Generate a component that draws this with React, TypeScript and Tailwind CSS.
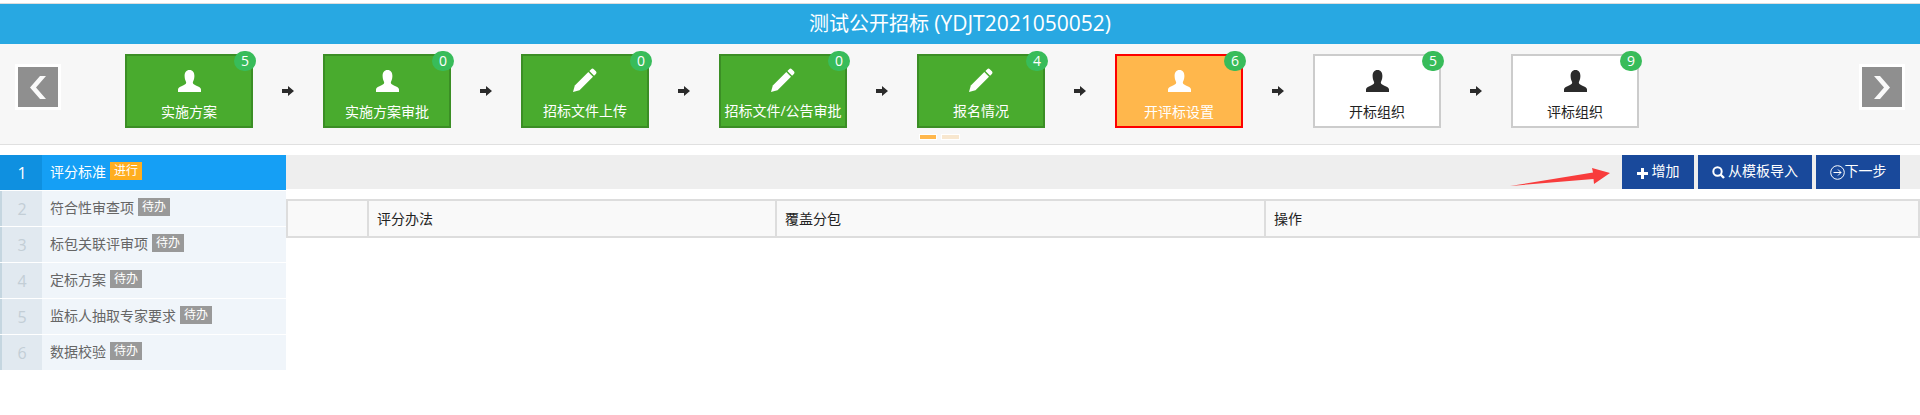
const steps = [
  { label: '实施方案', count: 5, icon: 'user', state: 'done' },
  { label: '实施方案审批', count: 0, icon: 'user', state: 'done' },
  { label: '招标文件上传', count: 0, icon: 'pencil', state: 'done' },
  { label: '招标文件/公告审批', count: 0, icon: 'pencil', state: 'done' },
  { label: '报名情况', count: 4, icon: 'pencil', state: 'done' },
  { label: '开评标设置', count: 6, icon: 'user', state: 'current' },
  { label: '开标组织', count: 5, icon: 'user', state: 'todo' },
  { label: '评标组织', count: 9, icon: 'user', state: 'todo' },
];

const menu = ['评分标准', '符合性审查项', '标包关联评审项', '定标方案', '监标人抽取专家要求', '数据校验'];

function UserIcon({ className }: { className: string }) {
  return (
    <svg width="23" height="22" viewBox="0 0 23 22" className={className} fill="currentColor">
      <path d="M11.5 0C14.8 0 16.4 2.5 16.4 6C16.4 9.2 15.2 11 14.8 12.6C14.8 14.4 17 15 19 16C21.5 17 23 18 23 19.5V22H0V19.5C0 18 1.5 17 4 16C6 15 8.2 14.4 8.2 12.6C7.8 11 6.6 9.2 6.6 6C6.6 2.5 8.2 0 11.5 0Z" />
    </svg>
  );
}

function PencilIcon({ className }: { className: string }) {
  return (
    <svg width="24" height="24" viewBox="0 0 24 24" className={className} fill="currentColor">
      <path d="M0 24L1.8 17.6L15.3 4.1L20 8.8L6.5 22.3Z" />
      <path d="M16.4 3L18.2 1.2C19 0.4 20 0.4 20.8 1.2L22.9 3.3C23.7 4.1 23.7 5.1 22.9 5.9L21.1 7.7Z" />
    </svg>
  );
}

function StepArrow() {
  return (
    <div className="w-[70px] flex items-center justify-center text-[#2b2b2b]">
      <svg width="12" height="10" viewBox="0 0 12 10" fill="currentColor">
        <path d="M0 3H6V0L12 5L6 10V7H0Z" />
      </svg>
    </div>
  );
}

function NavButton({ points }: { points: string }) {
  return (
    <div className="mt-[10px] w-[46px] h-[46px] border-[3px] border-white bg-[#8f8f8f]">
      <svg width="40" height="40" viewBox="0 0 40 40" fill="#fafafa">
        <polygon points={points} />
      </svg>
    </div>
  );
}

function Step({ label, count, icon, state }: { label: string; count: number; icon: string; state: string }) {
  const box =
    state === 'done'
      ? 'bg-[#49ab2e] border-[#3b8e25] text-white'
      : state === 'current'
        ? 'bg-[#ffb74c] border-[#fe0000] text-white'
        : 'bg-white border-[#cccccc] text-[#222222]';
  const iconColor = state === 'todo' ? 'text-[#2b2b2b]' : 'text-white';

  return (
    <div className={`relative w-[128px] h-[74px] shrink-0 border-2 flex flex-col items-center ${box}`}>
      <span className="absolute -top-[5px] -right-[5px] w-[22px] h-[20px] rounded-full bg-[#38bc5a] text-white text-[14px] leading-[20px] text-center">
        {count}
      </span>
      {icon === 'user' ? (
        <UserIcon className={`mt-[14px] ${iconColor}`} />
      ) : (
        <PencilIcon className={`mt-[12px] ${iconColor}`} />
      )}
      <span className={`text-[14px] leading-[20px] whitespace-nowrap ${icon === 'user' ? 'mt-[10px]' : 'mt-[9px]'}`}>{label}</span>
    </div>
  );
}

function MenuRow({ index, label }: { index: number; label: string }) {
  const active = index === 0;
  return (
    <div className={`h-[35px] flex items-stretch ${active ? 'bg-[#159ff5]' : 'bg-[#f0f5fa]'}`}>
      <div
        className={`w-[42px] shrink-0 flex items-center justify-center text-[16px] ${
          active ? 'bg-[#0f90e0] text-white pl-[2px]' : 'bg-[#e1e9f0] border-l-2 border-[#c5d6e0] text-[#c3ced6]'
        }`}
      >
        {index + 1}
      </div>
      <div className={`pl-2 flex items-center gap-1 text-[14px] pb-[3px] ${active ? 'text-white' : 'text-[#666666]'}`}>
        <span>{label}</span>
        <span className={`w-[32px] h-[18px] flex items-center justify-center text-[12px] text-white ${active ? 'bg-[#ffae1f]' : 'bg-[#999999]'}`}>
          {active ? '进行' : '待办'}
        </span>
      </div>
    </div>
  );
}

export default function App() {
  return (
    <div className="min-h-[415px] bg-white pt-[3px] font-['Open_Sans','Noto_Sans_CJK_SC',sans-serif]">
      <div className="border-t border-[#dddddd] h-[41px] bg-[#28a8e2] text-white text-[20px] flex items-center justify-center">
        <span>
          测试公开招标 <span className="text-[21px]">(YDJT2021050052)</span>
        </span>
      </div>

      {/* Step carousel */}
      <div className="h-[101px] bg-[#f7f7f7] border-b border-[#e0e0e0] pt-[10px]">
        <div className="flex px-[15px]">
          <NavButton points="12,20.5 22,9 28,9 18,20.5 28,32 22,32" />
          <div className="flex-1 flex pl-[64px]">
            {steps.map((s, i) => (
              <div key={s.label} className="flex">
                <Step {...s} />
                {i < steps.length - 1 && <StepArrow />}
              </div>
            ))}
          </div>
          <NavButton points="28,20.5 18,9 12,9 22,20.5 12,32 18,32" />
        </div>
        <div className="flex gap-[4px] ml-[919px] mt-[6px]">
          <span className="w-[18px] h-[6px] border border-white bg-[#ffb74c]" />
          <span className="w-[19px] h-[6px] border border-white bg-[#f8e7cf]" />
        </div>
      </div>

      <div className="flex mt-[10px]">
        {/* Side menu */}
        <div className="w-[286px] shrink-0 flex flex-col gap-px">
          {menu.map((m, i) => (
            <MenuRow key={m} index={i} label={m} />
          ))}
        </div>

        {/* Main panel */}
        <div className="flex-1 relative">
          <div className="h-[34px] bg-[#eeeeee] flex justify-end gap-1 pr-[20px]">
            <button className="w-[72px] bg-[#19499b] text-white text-[14px] leading-[20px] pb-[2px] flex items-center justify-center gap-[4px]">
              <svg width="11" height="11" viewBox="0 0 11 11" fill="currentColor" className="mt-[5px]">
                <path d="M4 0H7V4H11V7H7V11H4V7H0V4H4Z" />
              </svg>
              增加
            </button>
            <button className="w-[114px] bg-[#19499b] text-white text-[14px] leading-[20px] pb-[2px] flex items-center justify-center gap-[3px]">
              <svg width="13" height="13" viewBox="0 0 13 13" fill="none" stroke="currentColor" className="mt-[3px]">
                <circle cx="5.5" cy="5.5" r="4.2" strokeWidth="2" />
                <path d="M8.5 8.5L12 12" strokeWidth="2.4" />
              </svg>
              从模板导入
            </button>
            <button className="w-[84px] bg-[#19499b] text-white text-[14px] leading-[20px] pb-[2px] flex items-center justify-center">
              <svg width="15" height="15" viewBox="0 0 15 15" fill="none" stroke="currentColor" strokeWidth="1" className="mt-[2px]">
                <circle cx="7.5" cy="7.5" r="6.8" />
                <path d="M3.5 7.5H11M8 4.5L11 7.5L8 10.5" />
              </svg>
              下一步
            </button>
          </div>

          {/* Red annotation arrow */}
          <svg width="104" height="20" viewBox="0 0 104 20" className="absolute top-[12px] left-[1223px]" fill="#f83c3c">
            <polygon points="1,19 84,5.5 83,1 101,6 85,17 84.5,12" />
          </svg>

          <table className="mt-[10px] w-[1634px] table-fixed border-collapse text-[14px] text-[#222222]">
            <colgroup>
              <col className="w-[81px]" />
              <col className="w-[408px]" />
              <col className="w-[489px]" />
              <col />
            </colgroup>
            <thead>
              <tr className="h-[37px] bg-[#f9f9f9]">
                <th className="border-2 border-[#dddddd]" />
                <th className="border-2 border-[#dddddd] px-2 text-left font-normal">评分办法</th>
                <th className="border-2 border-[#dddddd] px-2 text-left font-normal">覆盖分包</th>
                <th className="border-2 border-[#dddddd] px-2 text-left font-normal">操作</th>
              </tr>
            </thead>
          </table>
        </div>
      </div>
    </div>
  );
}
